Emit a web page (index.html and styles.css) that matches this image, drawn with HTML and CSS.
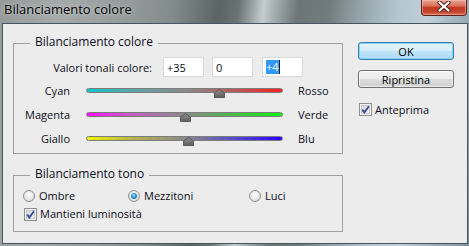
FILE: index.html
```html
<!DOCTYPE html>
<html lang="it">
<head>
<meta charset="utf-8">
<title>Bilanciamento colore</title>
<link rel="stylesheet" href="styles.css">
</head>
<body>
<div class="window">
  <div class="titlebar">
    <span class="title">Bilanciamento colore</span>
    <div class="close">
      <svg width="14" height="11" viewBox="0 0 14 11">
        <path d="M2.5 1.5 L11.5 9.5 M11.5 1.5 L2.5 9.5" stroke="#4a2a26" stroke-width="4.2" stroke-linecap="round"/>
        <path d="M2.5 1.5 L11.5 9.5 M11.5 1.5 L2.5 9.5" stroke="#ffffff" stroke-width="2.2" stroke-linecap="round"/>
      </svg>
    </div>
  </div>
  <div class="client">
    <div class="left">
      <div class="group g1">
        <span class="legend">Bilanciamento colore</span>
        <div class="values">
          <span class="values-label">Valori tonali colore:</span>
          <span class="field">+35</span>
          <span class="field">0</span>
          <span class="field"><span class="sel">+4</span><span class="caret"></span></span>
        </div>
        <div class="slider-row">
          <span class="lab-l">Cyan</span>
          <div class="track t-cr"><span class="thumb" style="left:67.5%"><svg width="11" height="9" viewBox="0 0 11 9"><defs><linearGradient id="tg1" x1="0" y1="0" x2="0" y2="1"><stop offset="0" stop-color="#8c8c8c"/><stop offset="1" stop-color="#5f5f5f"/></linearGradient></defs><path d="M5.5 0.5 L10.5 4 V8.5 H0.5 V4 Z" fill="url(#tg1)" stroke="#595959"/></svg></span></div>
          <span class="lab-r">Rosso</span>
        </div>
        <div class="slider-row">
          <span class="lab-l">Magenta</span>
          <div class="track t-mv"><span class="thumb" style="left:50%"><svg width="11" height="9" viewBox="0 0 11 9"><path d="M5.5 0.5 L10.5 4 V8.5 H0.5 V4 Z" fill="url(#tg1)" stroke="#595959"/></svg></span></div>
          <span class="lab-r">Verde</span>
        </div>
        <div class="slider-row">
          <span class="lab-l">Giallo</span>
          <div class="track t-gb"><span class="thumb" style="left:52%"><svg width="11" height="9" viewBox="0 0 11 9"><path d="M5.5 0.5 L10.5 4 V8.5 H0.5 V4 Z" fill="url(#tg1)" stroke="#595959"/></svg></span></div>
          <span class="lab-r">Blu</span>
        </div>
      </div>
      <div class="group g2">
        <span class="legend">Bilanciamento tono</span>
        <div class="radios">
          <span class="opt"><span class="radio"></span>Ombre</span>
          <span class="opt"><span class="radio on"></span>Mezzitoni</span>
          <span class="opt"><span class="radio"></span>Luci</span>
        </div>
        <div class="opt check-row">
          <span class="check"><svg width="13" height="13" viewBox="0 0 13 13"><path d="M3.2 6.6 L5.4 9.4 L9.9 3.2" fill="none" stroke="#3c4f93" stroke-width="1.9"/></svg></span>Mantieni luminosità
        </div>
      </div>
    </div>
    <div class="right">
      <div class="btn default">OK</div>
      <div class="btn">Ripristina</div>
      <div class="opt preview">
        <span class="check"><svg width="13" height="13" viewBox="0 0 13 13"><path d="M3.2 6.6 L5.4 9.4 L9.9 3.2" fill="none" stroke="#3c4f93" stroke-width="1.9"/></svg></span>Anteprima
      </div>
    </div>
  </div>
</div>
</body>
</html>
```
FILE: styles.css
```css
* { box-sizing: border-box; }
html, body { margin: 0; padding: 0; }
body {
  width: 469px;
  height: 246px;
  overflow: hidden;
  font-family: "Open Sans", "Noto Sans", sans-serif;
  font-size: 11px;
  color: #0c0c20;
}
.window {
  width: 469px;
  height: 246px;
  display: flex;
  flex-direction: column;
  padding: 0 1px 2px 2px;
  background: linear-gradient(97deg, #949b9a 0%, #a4aaa9 12%, #959d9c 25%, #828b8b 35%, #5b6465 44%, #6a7475 48%, #c3ccce 53%, #9aa5a8 56%, #6c7677 60%, #707b7d 66%, #93a2a8 72%, #b6c6d0 80%, #c0cfd8 86%, #9fb0ba 93%, #7f909a 100%);
}
.titlebar {
  height: 23px;
  flex-shrink: 0;
  display: flex;
  align-items: flex-start;
}
.title {
  font-size: 13px;
  line-height: 16px;
  margin: 1px 0 0 2px;
  color: #000;
  text-shadow: 0 0 6px rgba(255,255,255,0.55), 0 0 2px rgba(255,255,255,0.35);
}
.close {
  margin-left: auto;
  margin-right: 1px;
  width: 46px;
  height: 16px;
  border: 1px solid #5a2018;
  border-top: none;
  border-radius: 0 0 4px 4px;
  background: linear-gradient(#eba190 0%, #d8705b 40%, #c63a22 50%, #c2412a 75%, #dc6a4e 100%);
  box-shadow: inset 0 0 0 1px rgba(255,210,200,0.45);
  display: flex;
  align-items: flex-start;
  justify-content: center;
  padding-top: 1px;
}
.client {
  flex: 1;
  border: 1px solid #46555e;
  background: #ececec;
  display: flex;
  align-items: flex-start;
  padding: 18px 0 0 10px;
}
.left {
  width: 330px;
  margin-top: 1px;
}
.group {
  position: relative;
  border: 1px solid #a0a0a0;
}
.legend {
  position: absolute;
  top: -10px;
  left: 16px;
  padding: 0 5px;
  font-size: 12px;
  line-height: 16px;
  background: #ececec;
}
.g1 {
  height: 111px;
  padding-top: 13px;
}
.values {
  display: flex;
  align-items: center;
  height: 20px;
  margin-bottom: 1px;
}
.values-label {
  width: 138px;
  text-align: right;
  margin-right: 11px;
}
.field {
  width: 41px;
  height: 20px;
  background: #fff;
  border: 1px solid #d9d9d9;
  padding-left: 3px;
  display: flex;
  align-items: center;
}
.field + .field { margin-left: 8px; }
.field:last-child { margin-left: 9px; }
.sel {
  background: #3399ff;
  color: #fff;
  line-height: 14px;
}
.caret {
  width: 1px;
  height: 14px;
  background: #222;
}
.slider-row {
  display: flex;
  align-items: flex-start;
  height: 24px;
}
.lab-l {
  width: 56px;
  text-align: right;
  line-height: 16px;
  margin-top: 5px;
}
.lab-r {
  line-height: 16px;
  margin-top: 5px;
}
.track {
  position: relative;
  width: 197px;
  height: 5px;
  margin: 10px 15px 0 16px;
  border: 1px solid #7c7c7c;
  border-radius: 3px;
}
.t-cr { background: linear-gradient(to right, #12c6c6, #5aa9a9 22%, #8a8a8a 50%, #b06262 72%, #ff1d1d); }
.t-mv { background: linear-gradient(to right, #ff0fff, #c25ec2 22%, #8a8a8a 50%, #52b552 72%, #0cf40c); }
.t-gb { background: linear-gradient(to right, #f2f200, #b8b84a 22%, #8a8a8a 50%, #5e52c2 72%, #2a00ff); }
.thumb {
  position: absolute;
  top: 0;
  width: 11px;
  height: 9px;
  margin-left: -5px;
  display: block;
}
.thumb svg { display: block; }
.g2 {
  margin-top: 21px;
  height: 57px;
  padding: 12px 0 0 9px;
}
.radios {
  display: grid;
  grid-template-columns: 105px 121px auto;
  height: 16px;
  align-items: center;
}
.opt {
  display: flex;
  align-items: center;
  line-height: 16px;
}
.radio {
  position: relative;
  width: 12px;
  height: 12px;
  margin-right: 4px;
  border-radius: 50%;
  border: 1px solid #8e9090;
  background: radial-gradient(circle at 50% 40%, #ffffff 0%, #eeeeee 40%, #cfd1d1 100%);
}
.radio.on::after {
  content: "";
  position: absolute;
  left: 2px;
  top: 2px;
  width: 6px;
  height: 6px;
  border-radius: 50%;
  background: radial-gradient(circle at 45% 40%, #a6e4fb 0%, #2c97d6 45%, #134a86 100%);
}
.check-row {
  height: 16px;
  margin-top: 2px;
}
.check {
  width: 13px;
  height: 13px;
  margin: 0 3px 0 1px;
  border: 1px solid #8e8f8f;
  background: linear-gradient(135deg, #d3d6da, #f6f6f7);
  box-shadow: inset 0 0 0 1px #f4f4f4, inset 0 0 0 2px #c6cad0;
  display: block;
  position: relative;
}
.check svg {
  position: absolute;
  left: -1px;
  top: -1px;
}
.right {
  width: 96px;
  margin-left: 15px;
}
.btn {
  height: 18px;
  border: 1px solid #707070;
  border-radius: 3px;
  display: flex;
  align-items: center;
  justify-content: center;
  background: linear-gradient(#f3f3f3 0%, #ebebeb 50%, #dddddd 50%, #cfcfcf 100%);
  box-shadow: inset 0 0 0 1px rgba(255,255,255,0.6);
  color: #000;
}
.btn + .btn { margin-top: 10px; }
.btn.default {
  border-color: #3c7fb1;
  background: linear-gradient(#e5f4fc 0%, #d4edfb 50%, #bfe4f9 50%, #acdaf4 100%);
  box-shadow: inset 0 0 0 1px #86d4f3;
}
.preview {
  margin-top: 15px;
  height: 13px;
}
```
